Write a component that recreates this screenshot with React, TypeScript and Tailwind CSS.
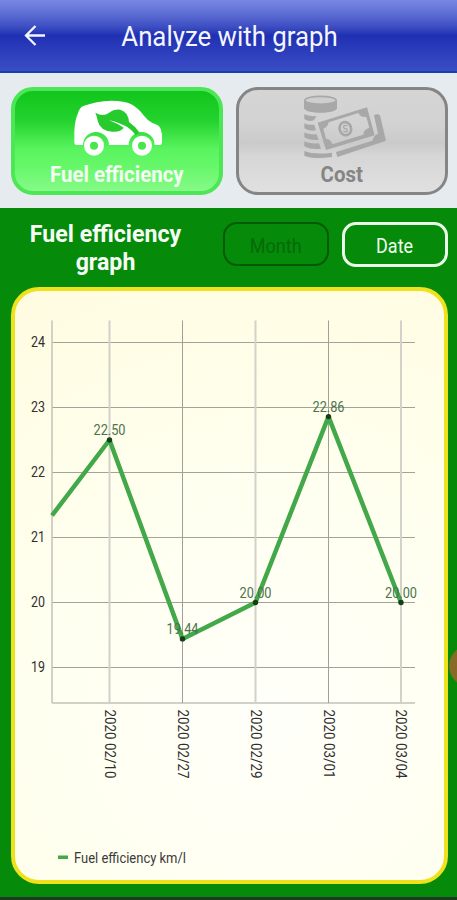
type Point = { x: number; date: string; value: number }

const points: Point[] = [
  { x: 109.5, date: "2020 02/10", value: 22.5 },
  { x: 182.5, date: "2020 02/27", value: 19.44 },
  { x: 255.5, date: "2020 02/29", value: 20 },
  { x: 328.5, date: "2020 03/01", value: 22.86 },
  { x: 401, date: "2020 03/04", value: 20 },
]

const ticks = [24, 23, 22, 21, 20, 19]
const yFor = (value: number) => 342.5 + (24 - value) * 65

function CarIcon() {
  return (
    <svg width="92" height="60" viewBox="12 15 276 180" className="relative left-px">
      <path
        fill="#fff"
        d="M26 159Q19 159 19 152V120Q20 85 30 64Q34 47 46 42Q85 27 130 26Q170 26 190 37Q210 48 226 69Q238 85 252 92L268 99Q279 106 280 120Q284 126 282 136V152Q282 159 275 159H260A39 39 0 0 0 182 159H123A39 39 0 0 0 45 159Z"
      />
      <path
        fill="#27cb2e"
        d="M82 62Q105 75 122 63Q138 51 157 53Q181 60 183 90Q202 103 215 122L203 130Q188 108 166 99Q145 89 122 84Q148 94 167 107Q158 121 133 119Q96 116 89 86Q86 70 82 62Z"
      />
      {[78, 222].map((cx) => (
        <circle key={cx} cx={cx} cy="161" r="21" fill="#4be550" stroke="#fff" strokeWidth="18" />
      ))}
    </svg>
  )
}

function MoneyIcon() {
  return (
    <svg width="86" height="66" viewBox="225 57 258 198" fill="#a8a8a8" className="relative left-[3px]">
      <path d="M231 77V100C236 118 325 118 330 100V77Z" />
      <ellipse cx="280.5" cy="76" rx="47" ry="12" fill="#cecece" stroke="#a8a8a8" strokeWidth="5" />
      <path d="M232 118Q245 125 269 123L260 136Q244 141 232 132Z" />
      <path d="M232 145Q244 151 262 149L267 166Q246 170 232 160Z" />
      <path d="M232 172Q245 179 269 178L275 194Q247 197 232 187Z" />
      <path d="M232 199Q247 207 276 205L282 221Q248 224 232 214Z" />
      <path d="M232 228Q261 240 315 233V246Q260 254 232 242Z" />
      <path
        fillRule="evenodd"
        d="M272 143L420 97L443 181L297 225ZM305 142Q304 155 289 161L297 191Q311 192 316 208L409 179Q409 164 427 158L418 126Q400 128 394 114Z"
      />
      <ellipse cx="355" cy="161" rx="17" ry="20" fill="none" stroke="#a8a8a8" strokeWidth="8" transform="rotate(-17 355 161)" />
      <path fill="none" stroke="#a8a8a8" strokeWidth="4" d="M361 153Q351 148 350 155Q350 161 356 161Q363 163 360 169Q354 173 349 167" />
      <path d="M441 121Q451 115 459 121L477 197L331 246L327 231L436 197Q440 180 453 176Z" />
    </svg>
  )
}

function Chart() {
  const line = points.map((p) => `${p.x},${yFor(p.value)}`).join(" ")
  return (
    <svg width="429" height="589" viewBox="15 291 429 589" className="block font-[Roboto,sans-serif]">
      {ticks.map((t) => (
        <g key={t}>
          <line x1="52" x2="415" y1={yFor(t)} y2={yFor(t)} stroke="#a3a39b" strokeWidth="1" />
          <text x="45" y={yFor(t) + 4} textAnchor="end" fontSize="14.5" fill="#303030" textLength="14" lengthAdjust="spacingAndGlyphs">
            {t}
          </text>
        </g>
      ))}
      <line x1="52" x2="415" y1="703" y2="703" stroke="#c2c2ba" strokeWidth="1.5" />
      <line x1="52" x2="52" y1="320.5" y2="703" stroke="#c2c2ba" strokeWidth="1.5" />
      {points.map((p, i) => (
        <line
          key={p.date}
          x1={p.x}
          x2={p.x}
          y1="320.5"
          y2="703"
          stroke={i % 2 ? "#a0a098" : "#d2d2ca"}
          strokeWidth={i % 2 ? 1 : 2}
        />
      ))}
      <polyline points={`52,515.5 ${line}`} fill="none" stroke="#42a849" strokeWidth="4.5" strokeLinejoin="bevel" />
      {points.map((p) => (
        <g key={p.date}>
          <circle cx={p.x} cy={yFor(p.value)} r="2.7" fill="#153d18" />
          <text x={p.x} y={yFor(p.value) - 5} textAnchor="middle" fontSize="14.5" fill="#4b744e" textLength="32" lengthAdjust="spacingAndGlyphs">
            {p.value.toFixed(2)}
          </text>
          <text
            transform={`translate(${p.x - 5} 709.5) rotate(90)`}
            fontSize="14.5"
            fill="#303030"
            textLength="69"
            lengthAdjust="spacingAndGlyphs"
          >
            {p.date}
          </text>
        </g>
      ))}
      <rect x="58" y="855.5" width="10" height="3.5" fill="#42a849" />
      <text x="74" y="862.5" fontSize="14.5" fill="#3a3a3a" textLength="112" lengthAdjust="spacingAndGlyphs">
        Fuel efficiency km/l
      </text>
    </svg>
  )
}

export default function App() {
  return (
    <div className="relative flex h-[900px] w-[457px] flex-col overflow-hidden bg-[#e6ebf0] font-[Roboto,sans-serif]">
      <header className="relative flex h-[73px] shrink-0 items-center justify-center border-b-2 border-[#1740aa] bg-[linear-gradient(#7887e3_0%,#5d6cd3_20%,#3c4dc2_38%,#1f31b3_50%,#2638b8_62%,#3b4dc4_100%)]">
        <svg className="absolute top-[24px] left-[24px]" width="22" height="23" fill="none" stroke="#f2f4ff" strokeWidth="2.3">
          <path d="M21 11.5H2.5M11.5 2L2 11.5L11.5 21" />
        </svg>
        <h1 className="relative left-px top-px origin-center scale-x-[0.945] text-[27.3px] leading-8 text-[#f4f5ff]">
          Analyze with graph
        </h1>
      </header>

      <div className="flex h-[135px] shrink-0 gap-[13px] pt-[14px] pr-[9px] pl-[11px]">
        <button className="flex h-[108px] w-[212px] flex-col items-center rounded-[22px] border-4 border-[#4ce657] bg-[linear-gradient(#11c51c_0%,#24d32e_30%,#59f45e_58%,#66f769_75%,#86fa88_100%)] pt-[6px]">
          <CarIcon />
          <span className="mt-[5px] scale-x-[0.93] text-[22px] leading-[26px] font-bold whitespace-nowrap text-[#f3fff2]">
            Fuel efficiency
          </span>
        </button>
        <button className="flex h-[108px] w-[212px] flex-col items-center rounded-[22px] border-[3px] border-[#858585] bg-[linear-gradient(#d5d5d5_0%,#d2d2d2_35%,#cacaca_52%,#d6d6d6_65%,#e0e0e0_100%)] pt-[4px]">
          <MoneyIcon />
          <span className="mt-[2px] scale-x-[0.93] text-[22px] leading-[26px] font-bold text-[#858585]">Cost</span>
        </button>
      </div>

      <main className="flex grow flex-col bg-[#058a09] pr-[9px] pl-[11px]">
        <div className="flex h-[79px] shrink-0 items-start pt-[14px]">
          <h2 className="mt-[-2px] ml-px w-[187px] scale-x-[0.965] text-center text-[24px] leading-[28px] font-bold text-[#f6fff6]">
            Fuel efficiency
            <br />
            graph
          </h2>
          <button className="ml-[24px] h-[44px] w-[106px] shrink-0 rounded-[14px] border-2 border-[#055a08] pt-[3px] text-[20px] leading-6 text-[#06690a]">
            <span className="inline-block scale-x-[0.9]">Month</span>
          </button>
          <button className="ml-[13px] h-[45px] w-[106px] shrink-0 rounded-[14px] border-[3px] border-[#eaffea] pt-[3px] text-[20px] leading-6 text-[#f0fff0]">
            <span className="inline-block scale-x-[0.9]">Date</span>
          </button>
        </div>
        <div className="h-[597px] w-[437px] shrink-0 overflow-hidden rounded-[28px] border-4 border-[#efe11c] bg-[radial-gradient(circle_at_60%_72%,#fffffa_0%,#fffff0_45%,#fffce0_100%)]">
          <Chart />
        </div>
      </main>
      <div className="h-[3px] shrink-0 bg-[#1c3a20]" />

      <div className="absolute top-[645px] left-[449px] size-[42px] rounded-full bg-[#856a28]" />
    </div>
  )
}
